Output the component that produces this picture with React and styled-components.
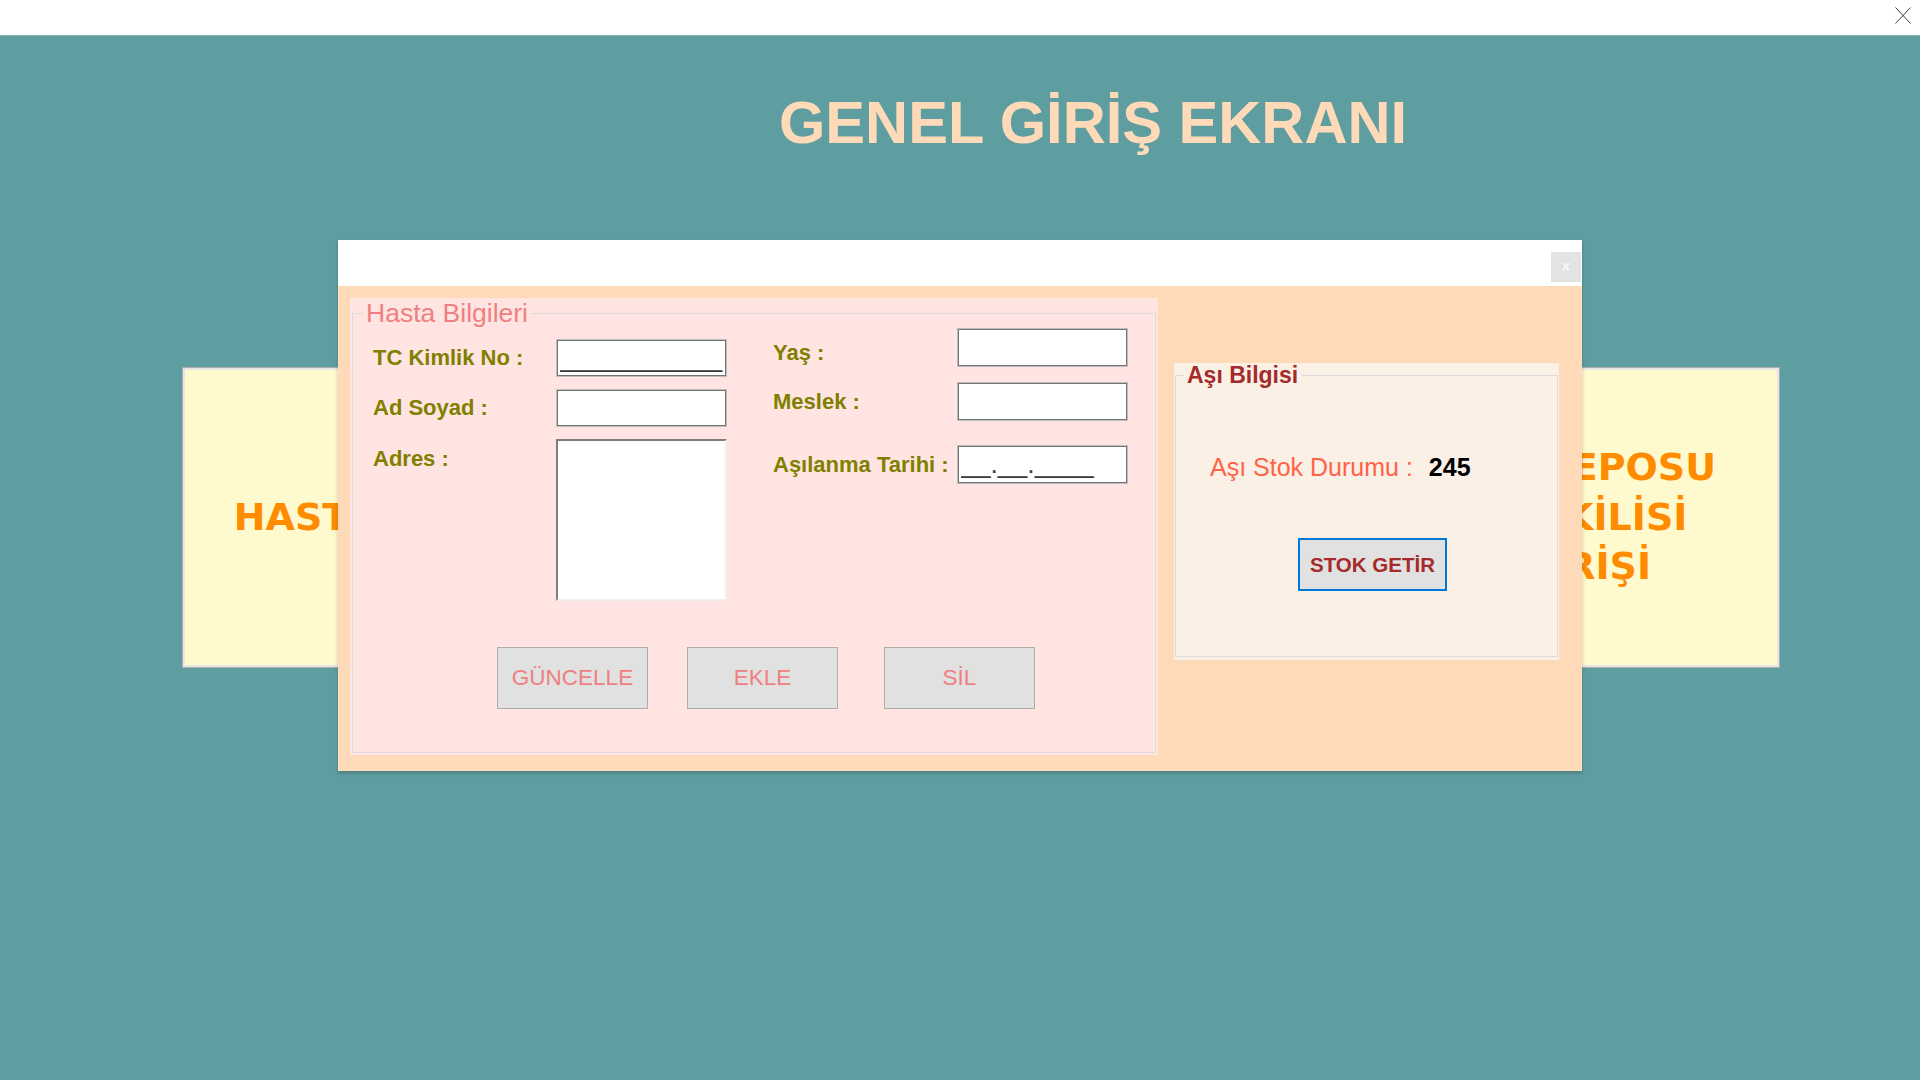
import React from "react";
import styled, { createGlobalStyle } from "styled-components";

const Global = createGlobalStyle`
  html, body { margin: 0; padding: 0; background: #ffffff; overflow: hidden; }
  * { box-sizing: border-box; }
`;

const Screen = styled.div`
  position: relative;
  width: 1920px;
  height: 1080px;
  display: flex;
  flex-direction: column;
  font-family: "Liberation Sans", Arial, sans-serif;
`;

const WindowBar = styled.div`
  height: 35px;
  flex: none;
  background: #ffffff;
  display: flex;
  justify-content: flex-end;
  align-items: flex-start;
  padding: 7px 9px 0 0;
`;

const Desktop = styled.main`
  flex: 1;
  background: #5f9ea0;
  border-top: 1px solid #86b4b6;
  display: flex;
  flex-direction: column;
`;

const Heading = styled.h1`
  margin: 57px 0 0 0;
  padding-left: 779px;
  font-family: "Liberation Sans", Arial, sans-serif;
  font-weight: 700;
  font-size: 59.6px;
  line-height: 59px;
  color: #ffdab9;
  white-space: nowrap;
`;

const CardRow = styled.div`
  margin-top: 215px;
  padding-left: 182px;
  display: flex;
  gap: 822px;
`;

const EntryCard = styled.button`
  width: 388px;
  height: 301px;
  background: #fffacd;
  border: 1px solid #adadad;
  box-shadow: inset 0 0 0 2px #e6e6e6;
  display: flex;
  align-items: center;
  justify-content: center;
  text-align: center;
  font-family: "DejaVu Sans", Verdana, sans-serif;
  font-weight: 700;
  font-size: 38px;
  line-height: 49.5px;
  color: #ff8c00;
  padding: 0;
  white-space: nowrap;
`;

const Dialog = styled.section`
  position: absolute;
  left: 338px;
  top: 240px;
  width: 1244px;
  height: 531px;
  display: flex;
  flex-direction: column;
  box-shadow: 0 2px 4px rgba(0, 0, 0, 0.22);
`;

const DialogBar = styled.div`
  height: 46px;
  flex: none;
  background: #ffffff;
  display: flex;
  justify-content: flex-end;
  align-items: flex-start;
  padding: 12px 1px 0 0;
`;

const DialogClose = styled.button`
  width: 30px;
  height: 30px;
  border: none;
  padding: 0 0 3px 0;
  background: #e3e3e3;
  color: #f8f8f8;
  font-family: "Liberation Sans", Arial, sans-serif;
  font-weight: 700;
  font-size: 15px;
  line-height: 1;
  display: flex;
  align-items: center;
  justify-content: center;
`;

const DialogBody = styled.div`
  flex: 1;
  background: #ffdab9;
  display: flex;
  align-items: flex-start;
  gap: 16px;
  padding: 12px 0 0 12px;
`;

const GroupPanel = styled.div`
  width: ${(p) => p.$w}px;
  height: ${(p) => p.$h}px;
  margin-top: ${(p) => p.$mt || 0}px;
  background: ${(p) => p.$bg};
  padding: ${(p) => p.$pad};
  flex: none;
`;

const Frame = styled.fieldset`
  margin: 0;
  padding: 0;
  min-width: 0;
  height: 100%;
  border: 1px solid #dcdcdc;
`;

const Legend = styled.legend`
  margin-left: ${(p) => p.$ml}px;
  padding: 0 3px;
  font-family: "Liberation Sans", Arial, sans-serif;
  font-size: ${(p) => p.$size}px;
  font-weight: ${(p) => (p.$bold ? 700 : 400)};
  line-height: ${(p) => p.$lh}px;
  color: ${(p) => p.$color};
  white-space: nowrap;
`;

const FieldColumns = styled.div`
  display: flex;
  align-items: flex-start;
  gap: 46px;
  padding-left: 20px;
`;

const FieldColumn = styled.div`
  display: flex;
  flex-direction: column;
  margin-top: ${(p) => p.$mt || 0}px;
  gap: ${(p) => p.$gap || 0}px;
`;

const FieldRow = styled.div`
  display: flex;
  align-items: ${(p) => (p.$top ? "flex-start" : "center")};
  margin-top: ${(p) => p.$mt || 0}px;
`;

const Label = styled.label`
  width: ${(p) => p.$w}px;
  flex: none;
  padding-top: ${(p) => p.$drop || 0}px;
  font-family: "Liberation Sans", Arial, sans-serif;
  font-weight: 700;
  font-size: 22px;
  line-height: 24px;
  color: #808000;
  white-space: nowrap;
`;

const TextBox = styled.input`
  width: 171px;
  height: ${(p) => p.$h || 38}px;
  flex: none;
  background: #ffffff;
  border: 1px solid #bdbdbd;
  box-shadow: inset 0 0 0 1px #737373;
  padding: 0 0 0 3px;
  margin: 0;
  font-family: "Liberation Sans", Arial, sans-serif;
  font-size: 26.5px;
  color: #3a3a3a;
  outline: none;
`;

const MemoBox = styled.textarea`
  width: 171px;
  height: 162px;
  flex: none;
  resize: none;
  margin: 0;
  background: #ffffff;
  border-style: solid;
  border-width: 2px;
  border-color: #7d7d7d #f0f0f0 #f0f0f0 #7d7d7d;
  outline: none;
`;

const ActionRow = styled.div`
  display: flex;
  gap: 39px;
  margin-top: 46px;
  padding-left: 144px;
`;

const FormButton = styled.button`
  width: 151px;
  height: 62px;
  margin-left: ${(p) => p.$extra || 0}px;
  background: #e1e1e1;
  border: 1px solid #adadad;
  padding: 0;
  font-family: "Liberation Sans", Arial, sans-serif;
  font-size: 22.5px;
  color: #f08080;
`;

const StockLine = styled.div`
  display: flex;
  align-items: baseline;
  margin-top: 65px;
  padding-left: 34px;
  font-family: "Liberation Sans", Arial, sans-serif;
  font-size: 25px;
  line-height: 30px;
  white-space: nowrap;
`;

const StockLabel = styled.span`
  color: #ff6347;
`;

const StockValue = styled.span`
  margin-left: 16px;
  color: #000000;
  font-weight: 700;
`;

const StockButton = styled.button`
  display: block;
  width: 149px;
  height: 53px;
  margin: 56px 0 0 122px;
  background: #e1e1e1;
  border: 2px solid #0078d7;
  padding: 0;
  font-family: "Liberation Sans", Arial, sans-serif;
  font-weight: 700;
  font-size: 20.5px;
  color: #a52a2a;
`;

const CloseGlyph = () => (
  <svg width="16" height="17" viewBox="0 0 16 17">
    <path d="M0.5 0.5 L15.5 16.5 M15.5 0.5 L0.5 16.5" stroke="#444" strokeWidth="1" fill="none" />
  </svg>
);

export default function App() {
  return (
    <>
      <Global />
      <Screen>
        <WindowBar>
          <CloseGlyph />
        </WindowBar>
        <Desktop>
          <Heading>GENEL GİRİŞ EKRANI</Heading>
          <CardRow>
            <EntryCard>HASTA GİRİŞİ</EntryCard>
            <EntryCard>
              AŞI DEPOSU
              <br />
              YETKİLİSİ
              <br />
              GİRİŞİ
            </EntryCard>
          </CardRow>
        </Desktop>

        <Dialog>
          <DialogBar>
            <DialogClose>x</DialogClose>
          </DialogBar>
          <DialogBody>
            <GroupPanel $w={808} $h={457} $bg="#ffe4e1" $pad="0 2px 2px 2px">
              <Frame>
                <Legend $ml={10} $size={26.5} $lh={30} $color="#f08080">
                  Hasta Bilgileri
                </Legend>
                <FieldColumns>
                  <FieldColumn $mt={11} $gap={12}>
                    <FieldRow>
                      <Label $w={183}>TC Kimlik No :</Label>
                      <TextBox readOnly value="___________" />
                    </FieldRow>
                    <FieldRow>
                      <Label $w={183}>Ad Soyad :</Label>
                      <TextBox readOnly value="" />
                    </FieldRow>
                    <FieldRow $top>
                      <Label $w={183} $drop={8}>Adres :</Label>
                      <MemoBox readOnly value="" />
                    </FieldRow>
                  </FieldColumn>
                  <FieldColumn>
                    <FieldRow>
                      <Label $w={184} $drop={10}>Yaş :</Label>
                      <TextBox $h={39} readOnly value="" />
                    </FieldRow>
                    <FieldRow $mt={15}>
                      <Label $w={184}>Meslek :</Label>
                      <TextBox $h={39} readOnly value="" />
                    </FieldRow>
                    <FieldRow $mt={24}>
                      <Label $w={184}>Aşılanma Tarihi :</Label>
                      <TextBox $h={39} readOnly value="__.__.____" />
                    </FieldRow>
                  </FieldColumn>
                </FieldColumns>
                <ActionRow>
                  <FormButton>GÜNCELLE</FormButton>
                  <FormButton>EKLE</FormButton>
                  <FormButton $extra={7}>SİL</FormButton>
                </ActionRow>
              </Frame>
            </GroupPanel>

            <GroupPanel $w={385} $h={297} $mt={65} $bg="#faf0e6" $pad="0 1px 3px 1px">
              <Frame>
                <Legend $ml={8} $size={23} $lh={24} $bold $color="#a52a2a">
                  Aşı Bilgisi
                </Legend>
                <StockLine>
                  <StockLabel>Aşı Stok Durumu :</StockLabel>
                  <StockValue>245</StockValue>
                </StockLine>
                <StockButton>STOK GETİR</StockButton>
              </Frame>
            </GroupPanel>
          </DialogBody>
        </Dialog>
      </Screen>
    </>
  );
}
